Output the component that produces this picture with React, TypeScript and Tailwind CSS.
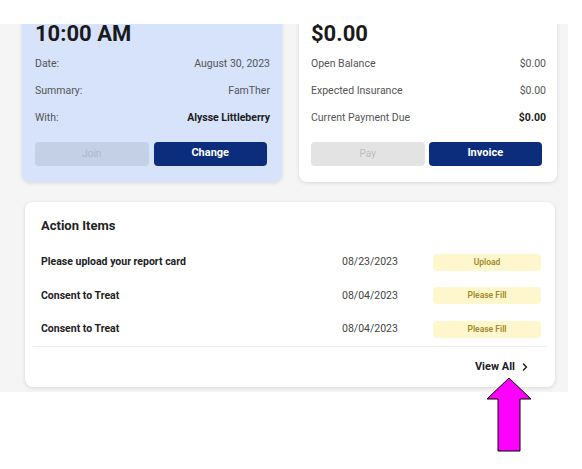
import { ChevronRight } from 'lucide-react'

const appointment = [
  { label: 'Date:', value: 'August 30, 2023' },
  { label: 'Summary:', value: 'FamTher' },
  { label: 'With:', value: 'Alysse Littleberry', strong: true },
]

const billing = [
  { label: 'Open Balance', value: '$0.00' },
  { label: 'Expected Insurance', value: '$0.00' },
  { label: 'Current Payment Due', value: '$0.00', strong: true },
]

const actionItems = [
  { title: 'Please upload your report card', date: '08/23/2023', action: 'Upload' },
  { title: 'Consent to Treat', date: '08/04/2023', action: 'Please Fill' },
  { title: 'Consent to Treat', date: '08/04/2023', action: 'Please Fill' },
]

type Row = { label: string; value: string; strong?: boolean }

function DetailRows({ rows }: { rows: Row[] }) {
  return (
    <div className="mt-[6.5px]">
      {rows.map((row) => (
        <div key={row.label} className="flex h-[27px] items-center justify-between text-[10.5px]">
          <span className="text-[#555]">{row.label}</span>
          <span className={row.strong ? 'font-bold text-[#1c1c1c]' : 'text-[#555]'}>{row.value}</span>
        </div>
      ))}
    </div>
  )
}

export default function App() {
  return (
    <div
      className="relative h-[469px] w-[582px] overflow-hidden bg-white"
      style={{ fontFamily: 'Roboto, "Liberation Sans", sans-serif' }}
    >
      <div className="h-6 bg-white" />

      <div className="w-[568px] overflow-hidden bg-[#f5f5f5] pb-[5px] pl-[22px] pr-[11px]">
        {/* Appointment + billing */}
        <div className="-mt-4 grid grid-cols-[260px_258px] gap-[17px]">
          <div className="rounded-lg bg-[#d6e3fb] pb-4 pl-[13px] pr-3 pt-4 shadow-[0_1px_4px_rgba(0,0,0,0.12)]">
            <div className="text-[22px] font-bold leading-[20px] text-[#1a1a1a]">10:00 AM</div>
            <DetailRows rows={appointment} />
            <div className="mr-[3px] mt-[10px] grid grid-cols-2 gap-[5px]">
              <button className="h-6 rounded bg-[#c4d0e6] text-[10px] text-[#aab8d2]">Join</button>
              <button className="h-6 rounded bg-[#0b2d7c] text-[11px] font-bold text-white">Change</button>
            </div>
          </div>

          <div className="rounded-lg bg-white pb-4 pl-3 pr-[11px] pt-4 shadow-[0_1px_4px_rgba(0,0,0,0.12)]">
            <div className="text-[22px] font-bold leading-[20px] text-[#1a1a1a]">$0.00</div>
            <DetailRows rows={billing} />
            <div className="mr-1 mt-[10px] grid grid-cols-2 gap-1">
              <button className="h-6 rounded bg-[#e3e3e3] text-[10px] text-[#bdbdbd]">Pay</button>
              <button className="h-6 rounded bg-[#0b2d7c] text-[11px] font-bold text-white">Invoice</button>
            </div>
          </div>
        </div>

        {/* Action items */}
        <div className="ml-[3px] mr-[2px] mt-5 rounded-lg bg-white pt-4 shadow-[0_1px_4px_rgba(0,0,0,0.12)]">
          <h3 className="pl-4 text-[13px] font-bold leading-4 text-[#222]">Action Items</h3>
          <div className="mx-2 mt-3 border-b border-[#ececec] pl-2 pr-1.5">
            {actionItems.map((item, i) => (
              <div key={i} className="flex h-[33.5px] items-center">
                <span className="flex-1 text-[10.5px] font-bold text-[#222]">{item.title}</span>
                <span className="w-[91px] text-[10.5px] text-[#444]">{item.date}</span>
                <span className="flex h-[17px] w-[108px] items-center justify-center rounded-sm bg-[#fef6cc] text-[8.5px] font-semibold text-[#a3882c]">
                  {item.action}
                </span>
              </div>
            ))}
          </div>
          <div className="flex h-10 items-center justify-end pr-[24px]">
            <span className="text-[11px] font-bold text-[#222]">View All</span>
            <ChevronRight className="ml-1 h-3 w-3 text-[#222]" strokeWidth={3} />
          </div>
        </div>
      </div>

      {/* Pointer arrow */}
      <svg className="absolute left-[486px] top-[377px]" width="47" height="76" viewBox="0 0 47 76">
        <polygon
          points="23,1 1,22 12,22 12,74 34,74 34,22 45,22"
          fill="#ff00ff"
          stroke="#000"
          strokeWidth="1"
          strokeLinejoin="miter"
        />
      </svg>
    </div>
  )
}
